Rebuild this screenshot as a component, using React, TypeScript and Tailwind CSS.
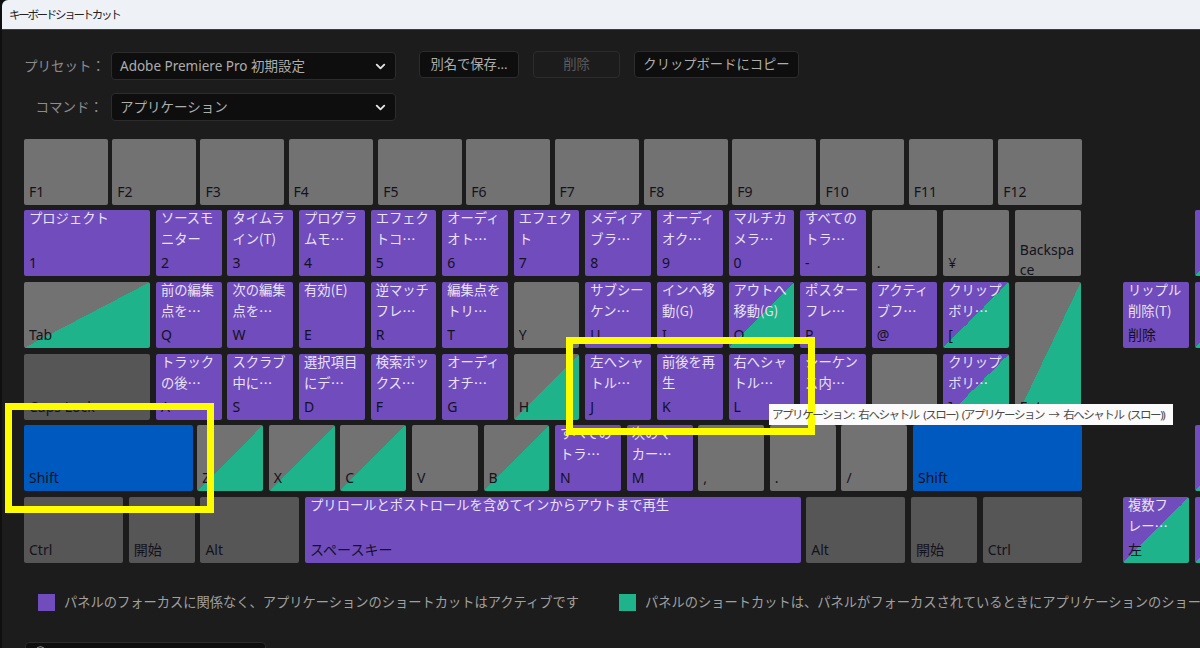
import { ChevronDown, Search } from "lucide-react";

type Tone = "gray" | "dark" | "purple" | "blue" | "grayGreen" | "purpleGreen";

interface KeyDef {
  top?: string[];
  label?: string;
  tone: Tone;
  width?: string;
  labelClass?: string;
}

const TONES: Record<Tone, string> = {
  gray: "bg-[#727272]",
  dark: "bg-[#565656]",
  purple: "bg-[#704cbc]",
  blue: "bg-[#0059bf]",
  grayGreen: "bg-[linear-gradient(to_bottom_right,#727272_50%,#1eb38a_50%)]",
  purpleGreen: "bg-[linear-gradient(to_bottom_right,#704cbc_50%,#1eb38a_50%)]",
};

const p = (label: string, ...top: string[]): KeyDef => ({ label, top, tone: "purple" });
const pg = (label: string, ...top: string[]): KeyDef => ({ label, top, tone: "purpleGreen" });
const g = (label: string): KeyDef => ({ label, tone: "gray" });
const gg = (label: string): KeyDef => ({ label, tone: "grayGreen" });

const FN_KEYS = ["F1", "F2", "F3", "F4", "F5", "F6", "F7", "F8", "F9", "F10", "F11", "F12"];

const NUMBER_ROW: KeyDef[] = [
  { ...p("1", "プロジェクト"), width: "w-[126px]" },
  p("2", "ソースモ", "ニター"),
  p("3", "タイムラ", "イン(T)"),
  p("4", "プログラ", "ムモ…"),
  p("5", "エフェク", "トコ…"),
  p("6", "オーディ", "オト…"),
  p("7", "エフェク", "ト"),
  p("8", "メディア", "ブラ…"),
  p("9", "オーディ", "オク…"),
  p("0", "マルチカ", "メラ…"),
  p("-", "すべての", "トラ…"),
  g("."),
  g("¥"),
  { ...g("Backspa\nce"), labelClass: "-mb-[3px] gap-[8px] leading-[12px]" },
];

const TAB_ROW: KeyDef[] = [
  { ...gg("Tab"), width: "w-[126px]" },
  p("Q", "前の編集", "点を…"),
  p("W", "次の編集", "点を…"),
  p("E", "有効(E)"),
  p("R", "逆マッチ", "フレ…"),
  p("T", "編集点を", "トリ…"),
  g("Y"),
  p("U", "サブシー", "ケン…"),
  p("I", "インへ移", "動(G)"),
  pg("O", "アウトへ", "移動(G)"),
  p("P", "ポスター", "フレ…"),
  p("@", "アクティ", "ブフ…"),
  pg("[", "クリップ", "ボリ…"),
];

const CAPS_ROW: KeyDef[] = [
  { label: "Caps Lock", tone: "dark", width: "w-[126px]" },
  p("A", "トラック", "の後…"),
  p("S", "スクラブ", "中に…"),
  p("D", "選択項目", "にデ…"),
  p("F", "検索ボッ", "クス…"),
  p("G", "オーディ", "オチ…"),
  gg("H"),
  p("J", "左へシャ", "トル…"),
  p("K", "前後を再", "生"),
  p("L", "右へシャ", "トル…"),
  p(";", "シーケン", "ス内…"),
  g(":"),
  pg("]", "クリップ", "ボリ…"),
];

const SHIFT_ROW: KeyDef[] = [
  gg("Z"),
  gg("X"),
  gg("C"),
  g("V"),
  gg("B"),
  p("N", "すべての", "トラ…"),
  p("M", "次のマ", "カー…"),
  g(","),
  g("."),
  g("/"),
];

const BOTTOM_ROW: KeyDef[] = [
  { label: "Ctrl", tone: "dark", width: "w-[99px]" },
  { label: "開始", tone: "dark", width: "w-[66px]" },
  { label: "Alt", tone: "dark", width: "w-[99px]" },
  { ...p("スペースキー", "プリロールとポストロールを含めてインからアウトまで再生"), width: "w-[495.5px]" },
  { label: "Alt", tone: "dark", width: "w-[99px]" },
  { label: "開始", tone: "dark", width: "w-[66px]" },
  { label: "Ctrl", tone: "dark", width: "w-[99px]" },
];

function Key({ def, className = "" }: { def: KeyDef; className?: string }) {
  return (
    <div
      className={`flex h-[66px] shrink-0 flex-col justify-between rounded-[2px] pl-[5px] pb-[3px] text-[13.3px] ${def.width ?? "w-[65.7px]"} ${TONES[def.tone]} ${className}`}
    >
      <div className="flex flex-col gap-[5px] whitespace-nowrap font-['Noto_Sans_CJK_JP',sans-serif] leading-[16px] text-[#e9e3f5]">
        {def.top?.map((line) => <div key={line}>{line}</div>)}
      </div>
      <div className={`flex flex-col whitespace-nowrap text-[14px] text-[#14121c] ${def.labelClass ?? "leading-[20px]"}`}>
        {def.label?.split("\n").map((line) => <div key={line}>{line}</div>)}
      </div>
    </div>
  );
}

function KeyRow({ keys }: { keys: KeyDef[] }) {
  return (
    <div className="flex gap-[5.9px]">
      {keys.map((k, i) => (
        <Key key={i} def={k} />
      ))}
    </div>
  );
}

function Select({ text }: { text: string }) {
  return (
    <div className="flex h-[28px] w-[285px] items-center justify-between rounded-[4px] border border-[#2c2c2c] bg-[#0e0e0e] pl-[8px] pr-[7px] text-[13.5px] text-[#adadad]">
      <span>{text}</span>
      <ChevronDown className="h-[15px] w-[15px] text-[#e4e4e4]" strokeWidth={3} />
    </div>
  );
}

function Btn({ text, width, disabled }: { text: string; width: string; disabled?: boolean }) {
  return (
    <div
      className={`flex h-[27px] items-center justify-center rounded-[4px] border border-[#2c2c2c] text-[13.3px] ${width} ${disabled ? "text-[#5c5c5c]" : "bg-[#0e0e0e] text-[#adadad]"}`}
    >
      {text}
    </div>
  );
}

export default function App() {
  return (
    <div className="relative h-[648px] w-[1200px] overflow-hidden bg-[#0f0f0f] font-['Noto_Sans','Noto_Sans_CJK_JP',sans-serif]">
      {/* Title bar */}
      <div className="ml-[2px] flex h-[29px] items-center rounded-tl-[6px] bg-[#eef2f7] pl-[7px] text-[11.5px] tracking-[-2.3px] text-[#222]">
        キーボードショートカット
      </div>

      <div className="ml-[2px] h-[619px] border-t border-[#3c3c3c] bg-[#1c1c1c] pl-[22px] pt-[22px]">
        {/* Preset / command */}
        <div className="flex items-center">
          <div className="w-[79px] whitespace-nowrap text-right text-[13.5px] text-[#8c8c8c]">プリセット：</div>
          <div className="ml-[8px]">
            <Select text="Adobe Premiere Pro 初期設定" />
          </div>
          <div className="-mt-[1px] ml-[23px] flex gap-[14px] self-start">
            <Btn text="別名で保存..." width="w-[100px]" />
            <Btn text="削除" width="w-[87px]" disabled />
            <Btn text="クリップボードにコピー" width="w-[165px]" />
          </div>
        </div>
        <div className="mt-[13px] flex items-center">
          <div className="w-[79px] whitespace-nowrap text-right text-[13.5px] text-[#8c8c8c]">コマンド：</div>
          <div className="ml-[8px]">
            <Select text="アプリケーション" />
          </div>
        </div>

        {/* Keyboard */}
        <div className="mt-[18px] flex">
          <div className="w-[1058px] shrink-0">
            <div className="flex gap-[4.2px]">
              {FN_KEYS.map((f) => (
                <Key
                  key={f}
                  def={{ label: f, tone: "gray", width: "w-[84px]" }}
                  className={f === "F5" || f === "F8" || f === "F12" ? "ml-[1.4px]" : ""}
                />
              ))}
            </div>
            <div className="mt-[5px] flex flex-col gap-[5.75px]">
              <KeyRow keys={NUMBER_ROW} />
              <div className="flex gap-[5.9px]">
                <div className="flex flex-col gap-[5.75px]">
                  <KeyRow keys={TAB_ROW} />
                  <KeyRow keys={CAPS_ROW} />
                </div>
                <Key
                  def={{ label: "Enter", tone: "grayGreen" }}
                  className="!h-[137.75px]"
                />
              </div>
              <div className="flex gap-[5.7px]">
                <Key def={{ label: "Shift", tone: "blue", width: "w-[169px]" }} className="-mr-[1.5px]" />
                {SHIFT_ROW.map((k, i) => (
                  <Key key={i} def={{ ...k, width: "w-[65.9px]" }} />
                ))}
                <Key def={{ label: "Shift", tone: "blue", width: "w-[168.8px]" }} />
              </div>
              <div className="flex gap-[5.7px]">
                {BOTTOM_ROW.map((k, i) => (
                  <Key key={i} def={k} />
                ))}
              </div>
            </div>
          </div>

          {/* Right-hand cluster, runs off the window */}
          <div className="ml-[41px] mt-[71px] grid shrink-0 grid-cols-[65.7px_65.7px] gap-x-[5.9px] gap-y-[5.75px]">
            <div />
            <Key def={pg("")} />
            <Key def={p("削除", "リップル", "削除(T)")} />
            <Key def={pg("")} />
            <div className="h-[66px]" />
            <div />
            <div />
            <Key def={pg("")} />
            <Key def={pg("左", "複数フ", "レー…")} />
            <Key def={pg("")} />
          </div>
        </div>

        {/* Legend */}
        <div className="mt-[31px] flex h-[17px] items-center whitespace-nowrap text-[13.25px] text-[#a0a0a0]">
          <div className="ml-[14px] h-[17px] w-[17px] shrink-0 bg-[#704cbc]" />
          <span className="ml-[9px]">パネルのフォーカスに関係なく、アプリケーションのショートカットはアクティブです</span>
          <div className="ml-[40px] h-[17px] w-[17px] shrink-0 bg-[#1eb38a]" />
          <span className="ml-[9px]">パネルのショートカットは、パネルがフォーカスされているときにアプリケーションのショートカットをオーバーライドします</span>
        </div>

        {/* Search box, cut by the bottom of the picture */}
        <div className="ml-[1px] mt-[31px] flex h-[28px] w-[241px] items-start rounded-[4px] border border-[#2c2c2c] bg-[#0e0e0e] pl-[8px] pt-[2px]">
          <Search className="h-[14px] w-[14px] text-[#a0a0a0]" strokeWidth={2} />
        </div>
      </div>

      {/* Tooltip background */}
      <div className="absolute left-[769px] top-[404px] z-10 h-[21px] w-[404px] bg-[#fbfbfb]" />

      {/* Yellow annotation frames */}
      <div className="absolute left-[5px] top-[403px] z-20 h-[110px] w-[209px] border-[7px] border-[#fdfd00]" />
      <div className="absolute left-[566px] top-[337px] z-20 h-[98px] w-[249px] border-[7px] border-[#fdfd00]" />

      {/* Tooltip text sits above the frame */}
      <div className="absolute left-[772px] top-[404px] z-30 whitespace-nowrap text-[11.5px] leading-[21px] tracking-[-1.45px] [word-spacing:3px] text-[#4a4a4a]">
        アプリケーション: 右へシャトル (スロー) (アプリケーション → 右へシャトル (スロー))
      </div>
    </div>
  );
}
